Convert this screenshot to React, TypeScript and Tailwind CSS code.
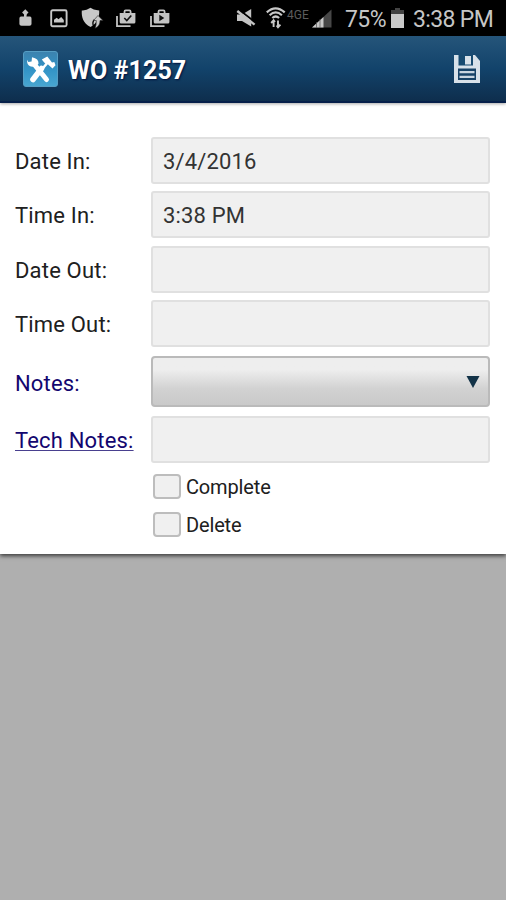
import type { ReactNode } from "react";

function PersonIcon() {
  return (
    <svg className="ml-[19px] h-[18px] w-[13px] shrink-0" viewBox="0 0 13 18" fill="#c4c4c4">
      <path d="M6.300.300l3.200 3.200-3.200 3.200-3.200-3.200z" />
      <rect x="5" y="5" width="2.600" height="4" />
      <path d="M2 7.500h3l1.300 1.200 1.300-1.200H11q1.500 0 1.500 2v5.500q0 1.700-2 1.700h-8Q.4 16.700.4 15V9.500q0-2 1.600-2z" />
    </svg>
  );
}

function PictureIcon() {
  return (
    <svg className="ml-[18px] h-[19px] w-[18px] shrink-0" viewBox="0 0 18 19" fill="#c8c8c8">
      <rect x="1.200" y="1.200" width="15.400" height="16" rx="1.500" fill="none" stroke="#c8c8c8" strokeWidth="1.900" />
      <path d="M4 13.500v-2.700l2.700-2 1.800 1.500 2.700-2.200 2.600 3v2.400z" />
    </svg>
  );
}

function ShieldIcon() {
  return (
    <svg className="ml-[13px] h-[22px] w-[23px] shrink-0" viewBox="0 0 23 22">
      <path d="M9.500.8Q5 3.800.8 3.400C.4 10 2 16 9.500 20 16.500 16 18.600 10 18.200 3.400 14 3.400 11 1.800 9.500.8z" fill="#c8c8c8" />
      <path d="M13 20q-2.500-4.500.5-7.500" fill="none" stroke="#000" strokeWidth="1.300" />
      <path d="M17 8.500l5 5h-3q.3 5.500-5 7.800 1.500-3.500 1.300-7.800h-2.800z" fill="#c8c8c8" stroke="#222" strokeWidth=".6" />
    </svg>
  );
}

function BagIcon({ children, gap }: { children: ReactNode; gap: string }) {
  return (
    <svg className={`${gap} h-[19px] w-[20px] shrink-0`} viewBox="0 0 20 19">
      <path d="M1 7v10.200h13.500" fill="none" stroke="#c4c4c4" strokeWidth="1.800" />
      <path d="M3.700 4.100h15.700v8.900q0 1.500-1.500 1.500H5.200q-1.500 0-1.500-1.500z" fill="#c4c4c4" />
      <path d="M8.500 4.500V2.700q0-1.400 1.200-1.400h3.700q1.200 0 1.200 1.400v1.800" fill="none" stroke="#c4c4c4" strokeWidth="1.800" />
      {children}
    </svg>
  );
}

function MuteIcon() {
  return (
    <svg className="ml-[66px] h-[20px] w-[20px] shrink-0" viewBox="0 0 20 20">
      <path d="M1 6.500h5L15.200 1v17.500L6 13H1z" fill="#c4c4c4" />
      <path d="M2.800 1.600L19.500 14.600" stroke="#000" strokeWidth="1.900" />
      <path d="M1.300 3L18.600 16.600" stroke="#c4c4c4" strokeWidth="2.400" />
    </svg>
  );
}

function WifiIcon() {
  return (
    <svg className="ml-[10px] h-[22px] w-[20px] shrink-0" viewBox="0 0 20 22" fill="none" stroke="#c8c8c8">
      <path d="M.8 5.400Q9.500-2.800 18.700 5.400M3.600 8.200Q9.700 2.600 15.900 8.200M6.300 11q3.400-3 6.800 0" strokeWidth="2.200" />
      <path d="M7.600 20v-6.500M5.200 16l2.400-2.700L9 15M12 13.500V20M10.600 18.500l1.400 1.800 2.400-2.700" strokeWidth="1.900" />
    </svg>
  );
}

function SignalIcon() {
  return (
    <svg className="ml-[2px] h-[19px] w-[20px] shrink-0" viewBox="0 0 20 19">
      <path d="M0 18.500L19.500.5v18z" fill="#474747" />
      <path d="M0 18.500L11.500 8v10.500z" fill="#c8c8c8" />
      <path d="M4.500 13v6M8 10v9" stroke="#555" strokeWidth=".7" />
    </svg>
  );
}

function BatteryIcon() {
  return (
    <svg className="h-[21px] w-[13px] shrink-0" viewBox="0 0 13 21">
      <path d="M4 0h5v2h4v5H0V2h4z" fill="#444" />
      <path d="M0 6h13v14H0z" fill="#cacaca" />
    </svg>
  );
}

function StatusBar() {
  return (
    <div className="flex h-9 items-center overflow-hidden bg-black text-[23px] text-[#c6c6c6]">
      <PersonIcon />
      <PictureIcon />
      <ShieldIcon />
      <BagIcon gap="ml-[12px]">
        <path d="M8.300 9l2.500 2.500 4.500-5" fill="none" stroke="#111" strokeWidth="1.600" />
      </BagIcon>
      <BagIcon gap="ml-[14px]">
        <path d="M9.300 5.800l5 3.200-5 3.300z" fill="#111" />
      </BagIcon>
      <MuteIcon />
      <WifiIcon />
      <span className="-mt-1.5 ml-px w-[23px] shrink-0 whitespace-nowrap text-[12px] leading-3 text-[#5c5c5c]">4GE</span>
      <SignalIcon />
      <span className="ml-[13px] mt-[4px] w-[46px] shrink-0 whitespace-nowrap tracking-[-0.6px]">75%</span>
      <BatteryIcon />
      <span className="ml-[9px] mt-[4px] shrink-0 whitespace-nowrap tracking-[-0.65px]">3:38 PM</span>
    </div>
  );
}

function ToolsLogo() {
  return (
    <svg className="h-[36px] w-[35px] shrink-0" viewBox="0 0 35 36">
      <defs>
        <linearGradient id="tile" x1="0" y1="0" x2="0" y2="1">
          <stop offset="0" stopColor="#3c82ae" />
          <stop offset=".5" stopColor="#3293c6" />
          <stop offset="1" stopColor="#48a6d1" />
        </linearGradient>
      </defs>
      <rect x=".5" y=".5" width="34" height="35" rx="2.500" fill="url(#tile)" stroke="#559dc3" />
      <g fill="none" stroke="#fff" strokeLinecap="round">
        <path d="M11 13L23.500 28.500" strokeWidth="5" />
        <path d="M18.500 17.500L10 28.500" strokeWidth="5.600" />
        <path d="M25 11L20.500 16.500" strokeWidth="2.600" />
      </g>
      <path d="M9 6.200l-.4 4.300-3.300.5-1-2.200q-1 5 3.500 6.700l4.700.5 3-3.200Q16 7.500 9 6.200z" fill="#fff" />
      <path d="M18.800 8.500l5.500-3 4.700 6 2.300-.6 1.200 3.400-3 3.300-4.700-4.400-2.600-.6-1.400-1.600z" fill="#fff" />
    </svg>
  );
}

function SaveIcon() {
  return (
    <svg className="h-[29px] w-[28px]" viewBox="0 0 28 29">
      <path d="M1 0h21l5 6v22H1z" fill="#d8e1e9" />
      <path d="M5.500 0h14.500v10.500H5.500z" fill="#174a70" />
      <path d="M12 1h6v8.500h-6z" fill="#d8e1e9" />
      <path d="M5 13.500h18V25H5z" fill="#174267" />
      <path d="M6.500 16h15v2.200h-15zM6.500 20.700h15v2.200h-15z" fill="#c9d5e0" />
    </svg>
  );
}

function TitleBar() {
  return (
    <header className="flex h-[67px] items-center border-b-2 border-[#06204a] bg-linear-to-b from-[#25557a] via-[#12436b] to-[#0e2e4d] pl-[23px] pr-[25px] shadow-[0_1px_3px_rgba(0,0,0,0.35)]">
      <ToolsLogo />
      <h1 className="ml-[10px] mt-[5px] whitespace-nowrap text-[25px] font-bold tracking-[0.1px] text-white [text-shadow:1px_1px_2px_#00103c]">WO #1257</h1>
      <button className="ml-auto mt-[2px]" aria-label="Save">
        <SaveIcon />
      </button>
    </header>
  );
}

function Field({ label, value = "", style = "text-[#202020]" }: { label: string; value?: string; style?: string }) {
  return (
    <div className="flex h-[47px] items-center">
      <label className="w-[136px] shrink-0 whitespace-nowrap pt-[2px] text-[22px] tracking-[0.18px]"><span className={style}>{label}</span></label>
      <div className="flex h-full w-[339px] items-center rounded-[3px] border-2 border-[#e0e0e0] bg-[#f0f0f0] pl-[10px] pt-px text-[22px] tracking-[0.15px] text-[#333]">{value}</div>
    </div>
  );
}

function CheckRow({ label }: { label: string }) {
  return (
    <label className="flex h-[25px] items-center gap-[5px] whitespace-nowrap text-[20px] tracking-[-0.15px] text-[#202020]">
      <span className="h-[25px] w-[28px] rounded-[4px] border-2 border-[#bdbdbd] bg-[#f0f0f0]" />
      <span>{label}</span>
    </label>
  );
}

export default function App() {
  return (
    <div className="h-[900px] w-[506px] overflow-hidden bg-[#afafaf] font-[Roboto,sans-serif]">
      <StatusBar />
      <main className="h-[518px] bg-white shadow-[0_2px_4px_rgba(0,0,0,0.65)]">
        <TitleBar />
        <form className="pl-[15px] pt-[34px]">
          <div className="flex flex-col gap-[7.4px]">
            <Field label="Date In:" value="3/4/2016" />
            <Field label="Time In:" value="3:38 PM" />
            <Field label="Date Out:" />
            <Field label="Time Out:" />
          </div>
          <div className="mt-[9px] flex h-[51px] items-center">
            <label className="w-[136px] shrink-0 pt-[3px] text-[22px] tracking-[0.18px] text-[#13066f]">Notes:</label>
            <div className="flex h-full w-[339px] items-center justify-end rounded-[4px] border-2 border-[#bababa] bg-linear-to-b from-[#eeeeee] from-25% via-[#d2d2d2] via-65% to-[#c9c9c9] pr-[8px]">
              <svg className="h-[12px] w-[14px]" viewBox="0 0 14 12"><path d="M.5 0h13L7 12z" fill="#123247" /></svg>
            </div>
          </div>
          <div className="mt-[9px]">
            <Field label="Tech Notes:" style="text-[#13066f] underline decoration-[#49408f] decoration-1 underline-offset-2 [text-decoration-skip-ink:none]" />
          </div>
          <div className="ml-[138px] mt-[11px] flex flex-col gap-[13px]">
            <CheckRow label="Complete" />
            <CheckRow label="Delete" />
          </div>
        </form>
      </main>
    </div>
  );
}
